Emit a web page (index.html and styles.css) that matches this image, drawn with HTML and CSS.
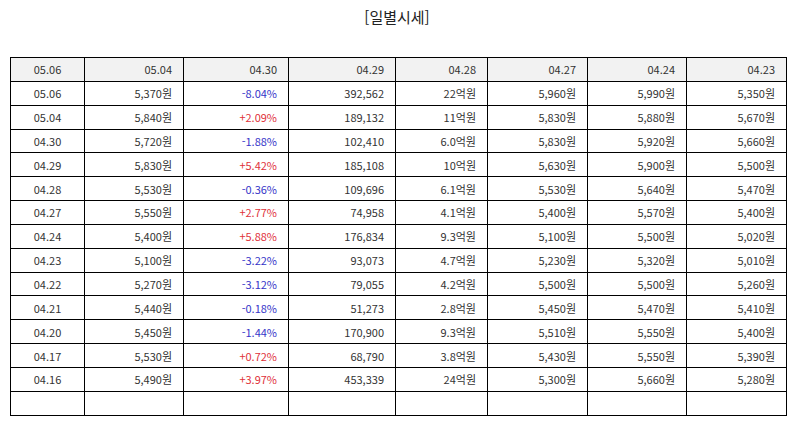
FILE: index.html
```html
<!DOCTYPE html>
<html lang="ko">
<head>
<meta charset="utf-8">
<title>일별시세</title>
<link rel="stylesheet" href="styles.css">
</head>
<body>
<h1 class="title">[일별시세]</h1>
<table class="quotes">
<colgroup>
<col class="c1"><col class="c2"><col class="c3"><col class="c4"><col class="c5"><col class="c6"><col class="c7"><col class="c8">
</colgroup>
<thead>
<tr><th class="date">05.06</th><th>05.04</th><th>04.30</th><th>04.29</th><th>04.28</th><th>04.27</th><th>04.24</th><th>04.23</th></tr>
</thead>
<tbody>
<tr><td class="date">05.06</td><td>5,370원</td><td class="down">-8.04%</td><td>392,562</td><td>22억원</td><td>5,960원</td><td>5,990원</td><td>5,350원</td></tr>
<tr><td class="date">05.04</td><td>5,840원</td><td class="up">+2.09%</td><td>189,132</td><td>11억원</td><td>5,830원</td><td>5,880원</td><td>5,670원</td></tr>
<tr><td class="date">04.30</td><td>5,720원</td><td class="down">-1.88%</td><td>102,410</td><td>6.0억원</td><td>5,830원</td><td>5,920원</td><td>5,660원</td></tr>
<tr><td class="date">04.29</td><td>5,830원</td><td class="up">+5.42%</td><td>185,108</td><td>10억원</td><td>5,630원</td><td>5,900원</td><td>5,500원</td></tr>
<tr><td class="date">04.28</td><td>5,530원</td><td class="down">-0.36%</td><td>109,696</td><td>6.1억원</td><td>5,530원</td><td>5,640원</td><td>5,470원</td></tr>
<tr><td class="date">04.27</td><td>5,550원</td><td class="up">+2.77%</td><td>74,958</td><td>4.1억원</td><td>5,400원</td><td>5,570원</td><td>5,400원</td></tr>
<tr><td class="date">04.24</td><td>5,400원</td><td class="up">+5.88%</td><td>176,834</td><td>9.3억원</td><td>5,100원</td><td>5,500원</td><td>5,020원</td></tr>
<tr><td class="date">04.23</td><td>5,100원</td><td class="down">-3.22%</td><td>93,073</td><td>4.7억원</td><td>5,230원</td><td>5,320원</td><td>5,010원</td></tr>
<tr><td class="date">04.22</td><td>5,270원</td><td class="down">-3.12%</td><td>79,055</td><td>4.2억원</td><td>5,500원</td><td>5,500원</td><td>5,260원</td></tr>
<tr><td class="date">04.21</td><td>5,440원</td><td class="down">-0.18%</td><td>51,273</td><td>2.8억원</td><td>5,450원</td><td>5,470원</td><td>5,410원</td></tr>
<tr><td class="date">04.20</td><td>5,450원</td><td class="down">-1.44%</td><td>170,900</td><td>9.3억원</td><td>5,510원</td><td>5,550원</td><td>5,400원</td></tr>
<tr><td class="date">04.17</td><td>5,530원</td><td class="up">+0.72%</td><td>68,790</td><td>3.8억원</td><td>5,430원</td><td>5,550원</td><td>5,390원</td></tr>
<tr><td class="date">04.16</td><td>5,490원</td><td class="up">+3.97%</td><td>453,339</td><td>24억원</td><td>5,300원</td><td>5,660원</td><td>5,280원</td></tr>
<tr class="empty"><td></td><td></td><td></td><td></td><td></td><td></td><td></td><td></td></tr>
</tbody>
</table>
</body>
</html>
```

FILE: styles.css
```css
html, body {
  margin: 0;
  padding: 0;
  background: #fff;
}
body {
  font-family: "Noto Sans CJK KR", "Noto Sans", sans-serif;
  color: #333;
}
.title {
  margin: 0;
  padding-top: 6px;
  height: 57px;
  box-sizing: border-box;
  text-align: center;
  font-size: 15px;
  font-weight: 400;
  line-height: 22px;
  color: #222;
}
.quotes {
  margin-left: 10px;
  width: 776px;
  table-layout: fixed;
  border-collapse: collapse;
  font-size: 11px;
}
.c1 { width: 74px; }
.c2 { width: 99px; }
.c3 { width: 105px; }
.c4 { width: 107px; }
.c5 { width: 92px; }
.c6 { width: 100px; }
.c7 { width: 99px; }
.c8 { width: 100px; }
.quotes th,
.quotes td {
  border: 1px solid #000;
  height: 22.85px;
  padding: 0 11px 0 4px;
  text-align: right;
  font-weight: 400;
  line-height: 14px;
  white-space: nowrap;
  color: #333;
}
.quotes thead th {
  background: #f2f2f2;
}
.quotes th.date,
.quotes td.date {
  text-align: center;
  padding: 0;
}
.quotes td.down { color: #3535c8; }
.quotes td.up { color: #e0313a; }
```
